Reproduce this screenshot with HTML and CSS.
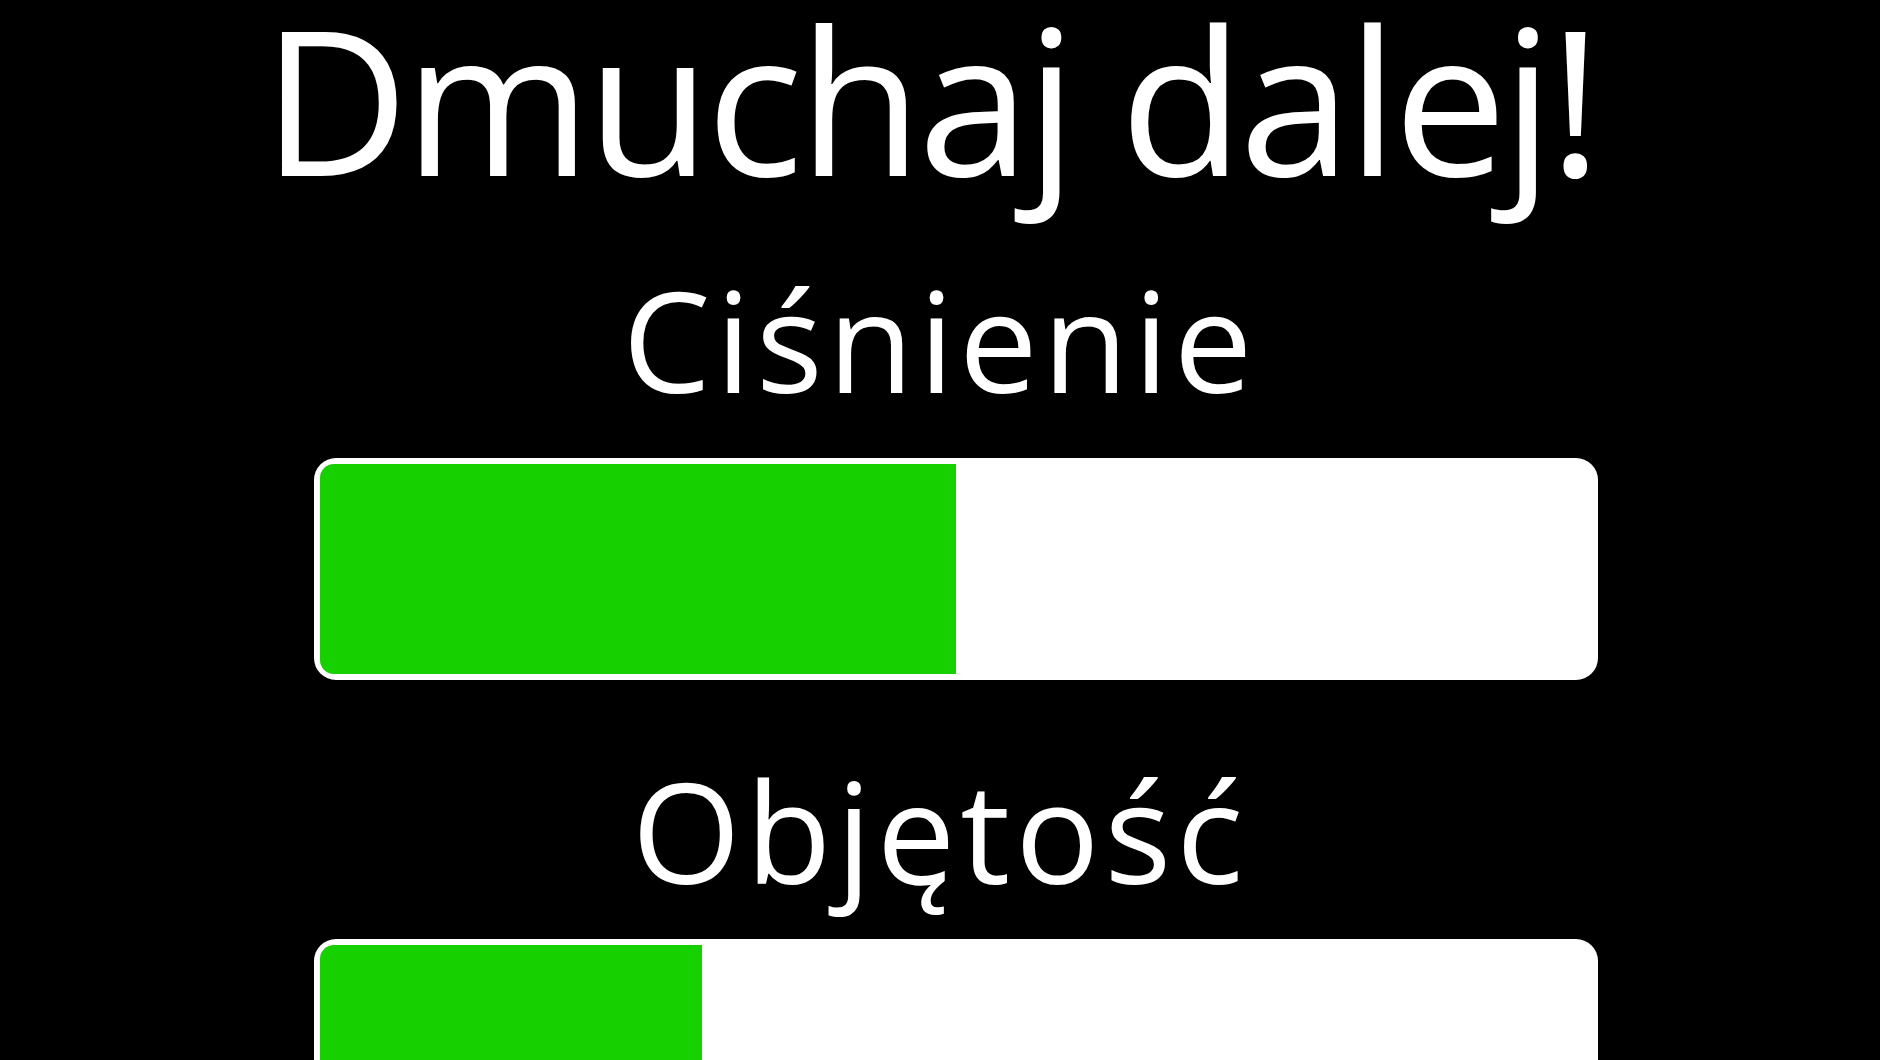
FILE: index.html
```html
<!DOCTYPE html>
<html lang="pl">

<head>
    <meta charset="UTF-8">
    <title>Dmuchaj dalej!</title>
    <link rel="stylesheet" href="styles.css">
</head>

<body>
    <h1>Dmuchaj dalej!</h1>

    <div class="miernik">
        <h2>Ciśnienie</h2>
        <div class="pasek">
            <div class="wypelnienie" style="width: 50%"></div>
        </div>
    </div>

    <div class="miernik">
        <h2>Objętość</h2>
        <div class="pasek">
            <div class="wypelnienie" style="width: 30%"></div>
        </div>
    </div>
</body>

</html>
```

FILE: styles.css
```css
body {
    background: #000;
    color: #fff;
    font-family: "Open Sans", sans-serif;
    margin: 0;
    display: flex;
    flex-direction: column;
    align-items: center;
}

h1 {
    font-size: 202px;
    font-weight: 400;
    line-height: 0.97;
    letter-spacing: -4.5px;
    margin: 0 20px 0 0;
}

h2 {
    font-size: 140px;
    font-weight: 400;
    line-height: 1;
    letter-spacing: 5px;
    margin: 73px 0 49px 0;
    text-align: center;
}

.miernik + .miernik h2 {
    margin: 80px 0 39px 0;
}

.miernik {
    display: flex;
    flex-direction: column;
    align-items: center;
}

.pasek {
    width: 1284px;
    height: 222px;
    box-sizing: border-box;
    padding: 6px;
    margin-left: 32px;
    background: #fff;
    border-radius: 22px;
}

.wypelnienie {
    height: 100%;
    background: #16d000;
    border-radius: 14px 0 0 14px;
}
```
